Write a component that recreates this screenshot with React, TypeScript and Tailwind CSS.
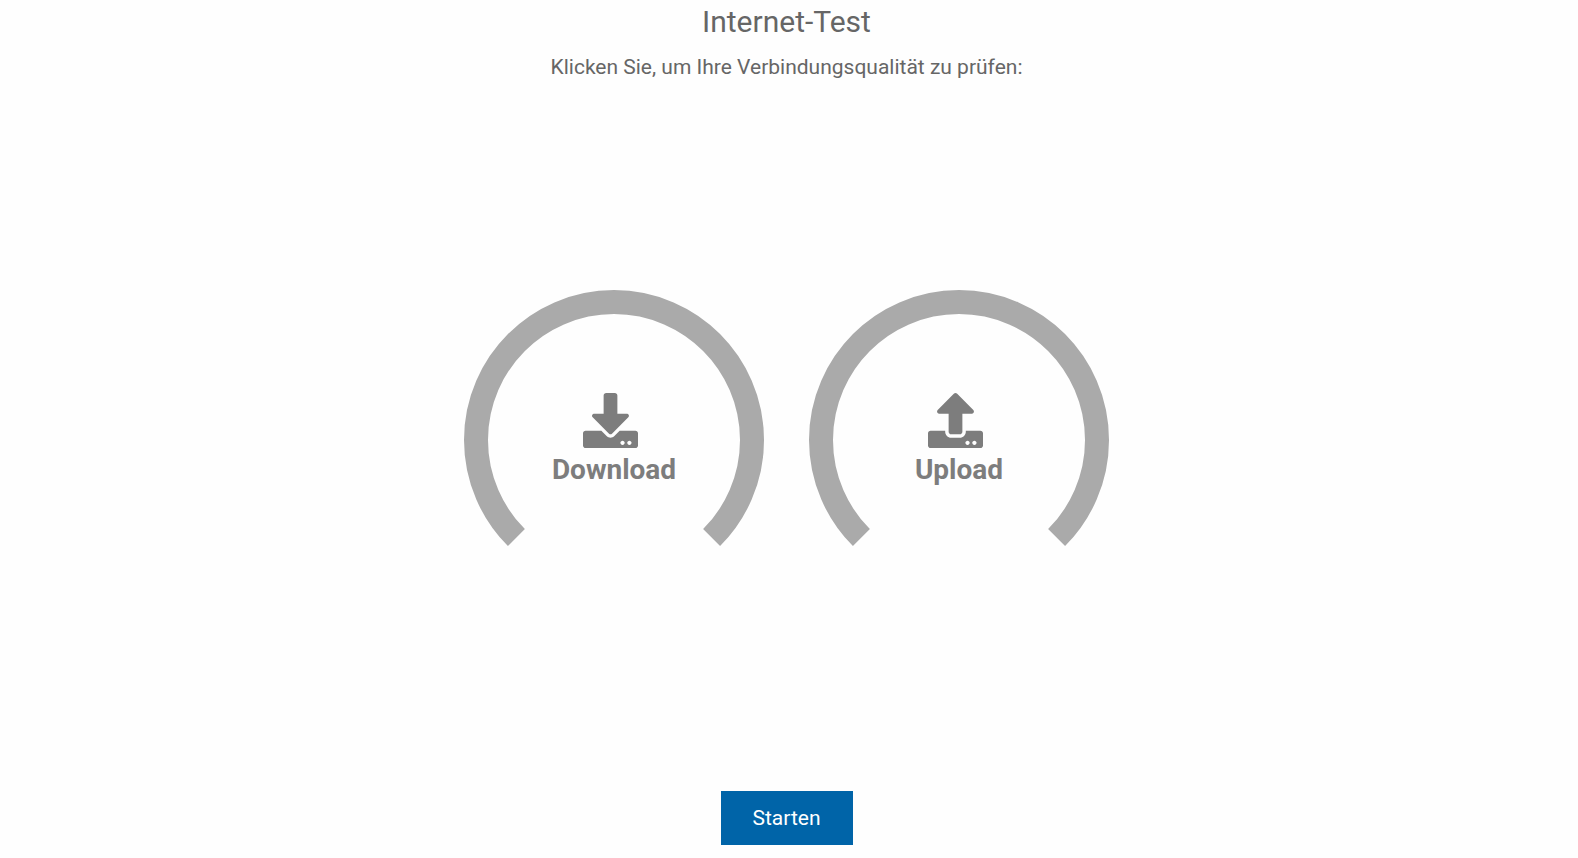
import { FaDownload, FaUpload } from "react-icons/fa";
import type { ReactNode } from "react";

interface GaugeProps {
  label: string;
  icon: ReactNode;
}

const iconClassName = "mr-[6px] h-[55px] w-[55px]";

function Gauge({ label, icon }: GaugeProps) {
  return (
    <div className="grid h-[300px] w-[300px] place-items-center">
      <svg viewBox="0 0 300 300" className="col-start-1 row-start-1 h-full w-full" aria-hidden="true">
        <path
          d="M52.4 247.6A138 138 0 1 1 247.6 247.6"
          fill="none"
          stroke="#aaaaaa"
          strokeWidth="24"
        />
      </svg>
      <div className="col-start-1 row-start-1 flex flex-col items-center gap-1 text-[#7d7d7d]">
        {icon}
        <span className="text-[28px] font-bold leading-9">{label}</span>
      </div>
    </div>
  );
}

export default function App() {
  return (
    <main className="flex min-h-screen flex-col items-center bg-[#fefefe] pr-[5px] font-[Roboto,sans-serif] text-[#666666]">
      <h1 className="mt-1 text-3xl">Internet-Test</h1>
      <p className="mt-3 text-[21px] leading-[30px]">
        Klicken Sie, um Ihre Verbindungsqualität zu prüfen:
      </p>
      <div className="flex flex-1 items-center gap-[45px] pt-[7px]">
        <Gauge label="Download" icon={<FaDownload className={iconClassName} aria-hidden="true" />} />
        <Gauge label="Upload" icon={<FaUpload className={iconClassName} aria-hidden="true" />} />
      </div>
      <button
        type="button"
        className="mb-[13px] cursor-pointer bg-[#0064a8] px-8 py-3 text-[21px] leading-[30px] text-white"
      >
        Starten
      </button>
    </main>
  );
}
